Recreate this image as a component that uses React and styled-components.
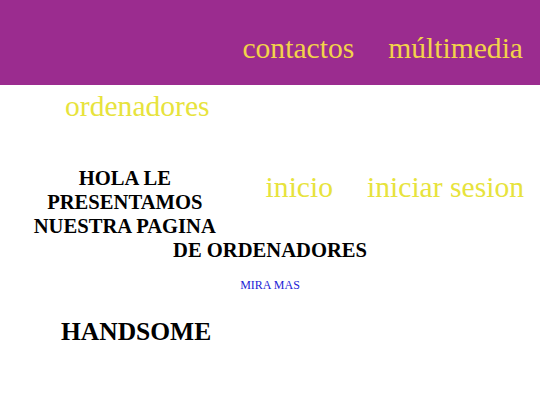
import React from 'react'
import styled, { createGlobalStyle } from 'styled-components'

const GlobalStyle = createGlobalStyle`
  body {
    margin: 0;
    background: #ffffff;
    font-family: "Liberation Serif", "Times New Roman", serif;
  }
`

const Header = styled.header`
  box-sizing: border-box;
  height: 85px;
  padding-top: 32px;
  background-color: #9b2c8f;
  display: flex;
  justify-content: flex-end;
`

const NavLink = styled.a`
  font-size: 29.6px;
  line-height: normal;
  margin: 0 17px;
  color: ${(p) => (p.$onPurple ? '#f2d34a' : '#e7e33c')};
  text-decoration: none;
  cursor: pointer;
`

const TopLink = styled(NavLink)`
  display: inline-block;
  margin: 5px 0 0 65px;
`

const Intro = styled.section`
  margin-top: 43px;
  padding: 0 30px;
`

const SideNav = styled.nav`
  float: right;
  box-sizing: border-box;
  height: 60px;
  margin: 0 -31px 0 29px;
  padding-top: 5px;
  display: flex;
  align-items: flex-start;
`

const Title = styled.h2`
  margin: 0;
  font-size: 20.6px;
  line-height: 24px;
  font-weight: bold;
  text-align: center;
  color: #000;
`

const More = styled.p`
  clear: both;
  margin: 16px 0 0;
  text-align: center;
  font-size: 12px;
  a {
    color: #2323d6;
    text-decoration: none;
  }
`

const Brand = styled.h1`
  margin: 24px 0 0;
  padding-left: 61px;
  font-size: 25.5px;
  font-weight: bold;
  color: #000;
`

export default function App() {
  return (
    <>
      <GlobalStyle />
      <Header>
        <NavLink $onPurple>contactos</NavLink>
        <NavLink $onPurple>múltimedia</NavLink>
      </Header>
      <TopLink>ordenadores</TopLink>
      <Intro>
        <SideNav>
          <NavLink>inicio</NavLink>
          <NavLink>iniciar sesion</NavLink>
        </SideNav>
        <Title>HOLA LE PRESENTAMOS NUESTRA PAGINA DE ORDENADORES</Title>
      </Intro>
      <More>
        <a href="#">MIRA MAS</a>
      </More>
      <Brand>HANDSOME</Brand>
    </>
  )
}
